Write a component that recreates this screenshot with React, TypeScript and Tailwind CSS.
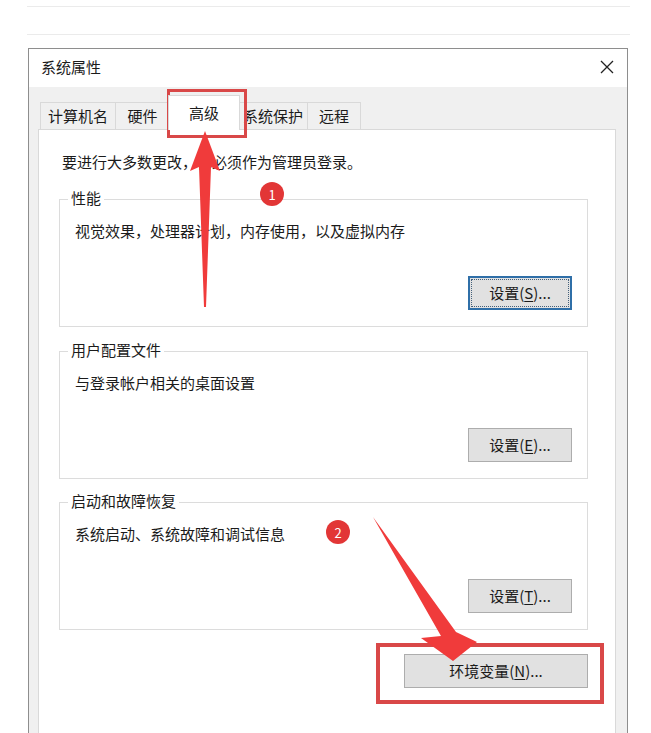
import React from "react";

const tabs = [
  { label: "计算机名", w: "w-[76px]" },
  { label: "硬件", w: "w-[54px]" },
  { label: "高级", w: "w-[72px]", active: true },
  { label: "系统保护", w: "w-[70px]" },
  { label: "远程", w: "w-[53px]" },
];

function WinButton({
  label,
  hotkey,
  focused,
  className = "",
}: {
  label: string;
  hotkey: string;
  focused?: boolean;
  className?: string;
}) {
  return (
    <div
      className={`relative flex h-[34px] items-center justify-center bg-[#e1e1e1] text-[15px] leading-none text-[#1b1b1b] ${
        focused ? "border-2 border-[#2f6fa8]" : "border border-[#adadad]"
      } ${className}`}
    >
      {focused && <span className="absolute inset-[1px] border border-dotted border-[#44607a]" />}
      <span className="pb-[2px]">
        {label}(<span className="underline underline-offset-2">{hotkey}</span>)...
      </span>
    </div>
  );
}

function Group({
  title,
  text,
  hotkey,
  focused,
}: {
  title: string;
  text: string;
  hotkey: string;
  focused?: boolean;
}) {
  return (
    <div className="relative flex h-[128px] w-[529px] flex-col border border-[#dcdcdc]">
      <span className="absolute -top-[13px] left-[8px] bg-white px-[3px] text-[15px] leading-[22px] text-[#1b1b1b]">
        {title}
      </span>
      <p className="pl-[15px] pt-[20px] text-[15px] leading-[22px] text-[#1b1b1b]">{text}</p>
      <WinButton label="设置" hotkey={hotkey} focused={focused} className="mb-[16px] mr-[15px] mt-auto w-[104px] self-end" />
    </div>
  );
}

export default function App() {
  return (
    <div className="relative h-[733px] w-[651px] overflow-hidden bg-white font-['Noto_Sans_CJK_SC','Noto_Sans',sans-serif]">
      {/* page lines above the dialog */}
      <div className="ml-[27px] mr-[21px] mt-[6px] h-[29px] border-y border-[#ebebeb]" />

      {/* dialog */}
      <div className="ml-[28px] mt-[13px] w-[600px] border-x border-t border-[#8e8e8e]">
        <div className="flex h-[38px] items-center justify-between bg-white pb-[3px] pl-[12px] pr-[12px]">
          <span className="text-[15px] leading-none text-[#1b1b1b]">系统属性</span>
          <svg width="14" height="14" viewBox="0 0 14 14" className="mr-[1px]">
            <path d="M1 1L13 13M13 1L1 13" stroke="#222" strokeWidth="1.3" />
          </svg>
        </div>

        <div className="bg-[#f0f0f0] pl-[9px] pr-[11px] pt-[7px]">
          {/* tabs */}
          <div className="flex h-[35px] items-end pl-[2px]">
            {tabs.map((t) =>
              t.active ? (
                <div
                  key={t.label}
                  className={`relative z-10 -mx-[2px] -mb-px flex h-[35px] ${t.w} items-start justify-center border-x border-t border-[#d9d9d9] bg-white pt-[6px] text-[15px] leading-[22px] text-[#1b1b1b]`}
                >
                  {t.label}
                </div>
              ) : (
                <div
                  key={t.label}
                  className={`flex h-[27px] ${t.w} items-center justify-center border-l border-t border-r border-[#d9d9d9] bg-[#f0f0f0] pb-[2px] text-[15px] leading-none text-[#1b1b1b] [&+&]:border-l-0`}
                >
                  {t.label}
                </div>
              )
            )}
          </div>

          {/* tab panel */}
          <div className="h-[620px] border border-[#d9d9d9] bg-white">
            <p className="pl-[23px] pt-[21px] text-[15px] leading-[22px] text-[#1b1b1b]">
              要进行大多数更改，你必须作为管理员登录。
            </p>
            <div className="ml-[20px] mt-[26px] flex w-[529px] flex-col">
              <Group title="性能" text="视觉效果，处理器计划，内存使用，以及虚拟内存" hotkey="S" focused />
              <div className="mt-[24px]">
                <Group title="用户配置文件" text="与登录帐户相关的桌面设置" hotkey="E" />
              </div>
              <div className="mt-[23px]">
                <Group title="启动和故障恢复" text="系统启动、系统故障和调试信息" hotkey="T" />
              </div>
              <WinButton label="环境变量" hotkey="N" className="mt-[24px] w-[184px] self-end" />
            </div>
          </div>
        </div>
      </div>

      {/* annotations */}
      <div className="absolute left-[167px] top-[89px] h-[49px] w-[80px] border-[3px] border-[#d94848]" />
      <div className="absolute left-[376px] top-[643px] h-[61px] w-[228px] border-[4px] border-[#d94848]" />

      <svg className="pointer-events-none absolute left-0 top-0" width="651" height="733" viewBox="0 0 651 733">
        <polygon points="205,131 220,171 211,167 206,307 204,307 199,167 190,171" fill="#f03b3b" />
        <polygon points="373,517 456,632 477,642 453,661 421,638 441,636" fill="#f03b3b" />
      </svg>

      <div className="absolute left-[260px] top-[182px] flex h-[24px] w-[24px] items-center justify-center rounded-full bg-[#e23636] text-[13px] leading-none text-white">
        1
      </div>
      <div className="absolute left-[326px] top-[520px] flex h-[24px] w-[24px] items-center justify-center rounded-full bg-[#e23636] text-[13px] leading-none text-white">
        2
      </div>
    </div>
  );
}
